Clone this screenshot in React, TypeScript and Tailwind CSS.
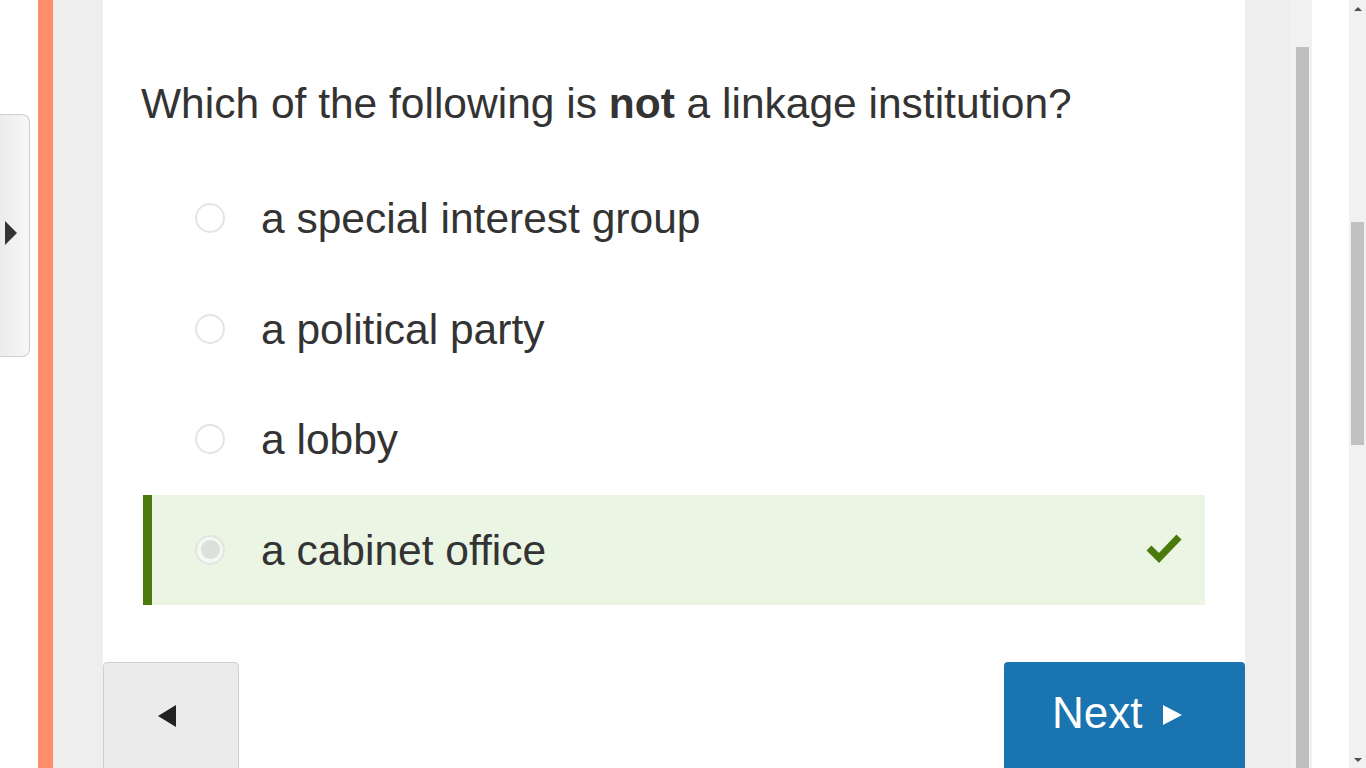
const options = [
  { label: "a special interest group", correct: false },
  { label: "a political party", correct: false },
  { label: "a lobby", correct: false },
  { label: "a cabinet office", correct: true },
];

function Radio({ checked }: { checked: boolean }) {
  return (
    <span className="flex h-[30px] w-[30px] shrink-0 items-center justify-center rounded-full border-2 border-[#e4e4e4] bg-white/40">
      {checked && <span className="h-[19px] w-[19px] rounded-full bg-[#dcdfdc]"></span>}
    </span>
  );
}

export default function App() {
  return (
    <div
      className="flex h-[768px] w-[1366px] overflow-hidden bg-white text-[#333333]"
      style={{ fontFamily: '"Liberation Sans", Arial, sans-serif' }}
    >
      {/* drawer toggle */}
      <div className="w-[38px] shrink-0 pt-[114px]">
        <button className="flex h-[243px] w-[30px] items-center rounded-r-[8px] border border-l-0 border-[#c8ced2] bg-gradient-to-r from-[#ececec] to-[#f7f7f7] pb-[5px] pl-[5px]">
          <span className="h-0 w-0 border-y-[12px] border-l-[12px] border-y-transparent border-l-[#333333]"></span>
        </button>
      </div>

      <div className="w-[15px] shrink-0 bg-[#ff8f6a]"></div>
      <div className="w-[50px] shrink-0 bg-[#eeeeee]"></div>

      {/* question card */}
      <main className="flex w-[1142px] shrink-0 flex-col">
        <div className="bg-white px-[38px] pt-[80px]">
          <h1 className="text-[42.5px] leading-[48px] font-normal">
            Which of the following is <b className="font-bold">not</b> a linkage institution?
          </h1>
        </div>
        <div className="bg-white px-[40px] pt-[35px] pb-[57px]">
          {options.map((o) => (
            <div
              key={o.label}
              className={
                "flex h-[110.5px] items-center border-l-[9px] pl-[43px] pr-[23px] " +
                (o.correct ? "border-[#4a7a0b] bg-[#eaf5e4]" : "border-transparent")
              }
            >
              <Radio checked={o.correct} />
              <span className="ml-[36px] flex-1 pt-[2px] text-[42.5px] leading-[48px]">{o.label}</span>
              {o.correct && (
                <svg width="36" height="32" viewBox="0 0 36 32" className="mb-[4px]">
                  <path d="M3 16 L13 26 L33 5" fill="none" stroke="#4a7a0b" strokeWidth="7" />
                </svg>
              )}
            </div>
          ))}
        </div>
        <div className="flex justify-between bg-white">
          <button className="flex h-[120px] w-[136px] items-start justify-start rounded-[4px] border border-[#cfcfcf] bg-[#ebebeb] pl-[54px] pt-[42px]">
            <span className="h-0 w-0 border-y-[11px] border-r-[18px] border-y-transparent border-r-[#222222]"></span>
          </button>
          <button className="flex h-[120px] w-[241px] items-start justify-start gap-[21px] rounded-[4px] bg-[#1a74b0] pl-[48px] pt-[26px] text-white">
            <span className="text-[44px] leading-[50px]">Next</span>
            <span className="mt-[17px] h-0 w-0 border-y-[10px] border-l-[19px] border-y-transparent border-l-white"></span>
          </button>
        </div>
      </main>

      <div className="w-[45px] shrink-0 bg-[#eeeeee]"></div>
      {/* inner scrollbar */}
      <div className="flex w-[22px] shrink-0 flex-col bg-[#f1f1f1] pl-[6px] pr-[3px]">
        <div className="h-[47px]"></div>
        <div className="flex-1 bg-[#bfbfbf]"></div>
      </div>
      <div className="w-[37px] shrink-0 bg-white"></div>

      {/* browser scrollbar */}
      <div className="flex w-[17px] shrink-0 flex-col items-center bg-[#f1f1f1]">
        <div className="flex h-[17px] items-center justify-center">
          <span className="h-0 w-0 border-x-[4px] border-b-[4px] border-x-transparent border-b-[#505050]"></span>
        </div>
        <div className="mt-[205px] h-[223px] w-[13px] bg-[#c1c1c1]"></div>
        <div className="flex-1"></div>
        <div className="flex h-[17px] items-center justify-center">
          <span className="h-0 w-0 border-x-[4px] border-t-[4px] border-x-transparent border-t-[#505050]"></span>
        </div>
      </div>
    </div>
  );
}
